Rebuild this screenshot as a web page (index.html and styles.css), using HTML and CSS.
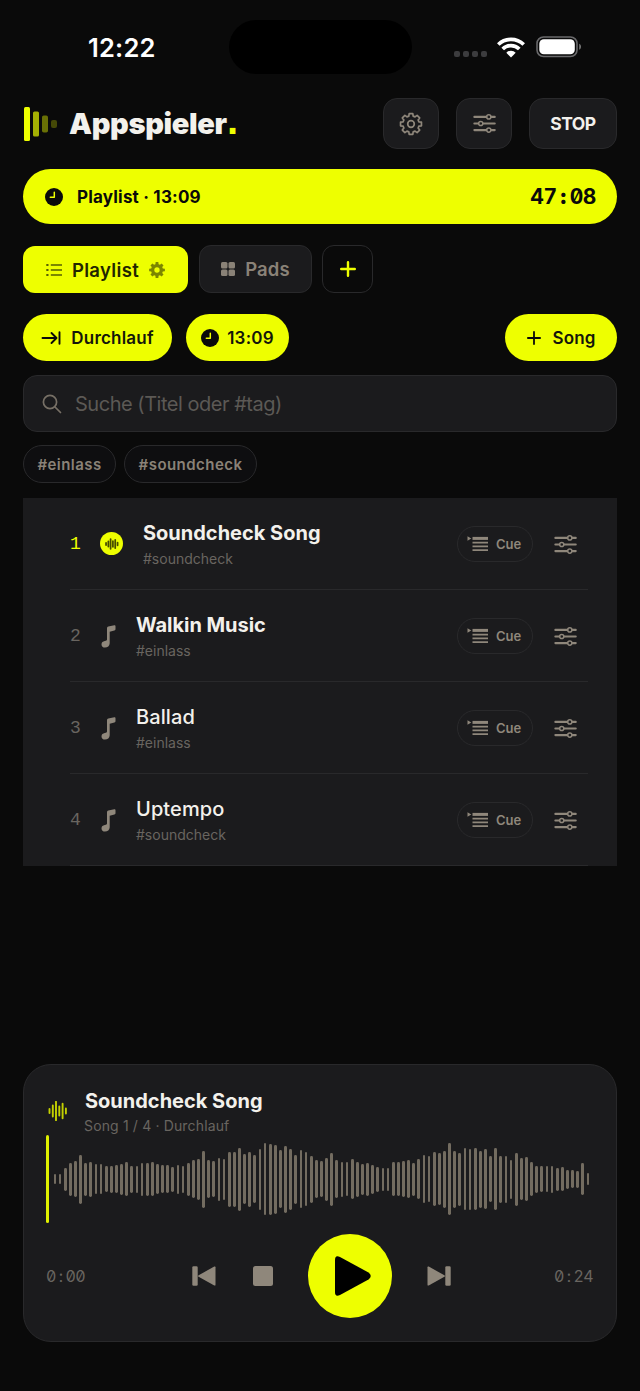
FILE: index.html
```html
<!DOCTYPE html>
<html lang="de">
<head>
<meta charset="utf-8">
<title>Appspieler</title>
<link rel="stylesheet" href="styles.css">
</head>
<body>
<svg class="defs" width="0" height="0">
  <symbol id="sliders" viewBox="0 0 22 20">
    <g fill="none" stroke="currentColor" stroke-width="2" stroke-linecap="round">
      <path d="M1.3 3.7H12.7M17.5 3.7H20.8M1.3 10H5M9.800 10H20.8M1.3 16.300H12.7M17.5 16.300H20.8"/>
      <circle cx="15.100" cy="3.7" r="2" stroke-width="1.4"/><circle cx="7.400" cy="10" r="2" stroke-width="1.4"/><circle cx="15.100" cy="16.300" r="2" stroke-width="1.4"/>
    </g>
  </symbol>
  <symbol id="clock" viewBox="0 0 18 18">
    <circle cx="9" cy="9" r="9" fill="#0a0a0a"/>
    <path d="M9.300 4.300V9.300H5.300" fill="none" stroke="#eeff00" stroke-width="1.500" stroke-linecap="round" stroke-linejoin="round"/>
  </symbol>
  <symbol id="note" viewBox="0 0 15 23">
    <path d="M6 3.200Q6 1.900 7.300 1.600L13.300.300Q14.500 0 14.500 1.200V4.300Q14.500 5.300 13.400 5.600L8.700 6.700V18.300C8.700 21 6.500 22.600 4 22.600C1.900 22.600.500 21.500.500 19.500C.5 17.500 1.900 16.500 3.800 16.100C5.300 15.800 6 15.400 6 14.500Z" fill="currentColor"/>
  </symbol>
  <symbol id="cue" viewBox="0 0 22 16">
    <path d="M.5.200L4.300 2.500L.5 4.800Z" fill="currentColor"/>
    <path d="M5.500 2.400H21" stroke="currentColor" stroke-width="3"/>
    <path d="M5.500 6.600H21M5.500 10.400H21M5.500 14.100H21" stroke="currentColor" stroke-width="1.900"/>
  </symbol>
  <symbol id="wave" viewBox="0 0 20 20">
    <path d="M1.500 8V12M4.800 4.500V15.500M8 .800V19.200M11.300 5.500V14.500M14.600 2.800V17.200M17.900 7.500V12.500" stroke="currentColor" stroke-width="1.900" stroke-linecap="round"/>
  </symbol>
</svg>
<div class="app">
  <div class="status">
    <span class="time">12:22</span>
    <span class="island"></span>
    <div class="signals">
      <span class="dots"><i></i><i></i><i></i><i></i></span>
      <svg class="wifi" width="28" height="21" viewBox="0 0 28 21"><g fill="none" stroke="#fff" stroke-width="3.700"><path d="M1.300 7.500A18.200 18.200 0 0 1 26.700 7.500"/><path d="M5.700 12A11.800 11.800 0 0 1 22.300 12"/></g><path d="M14 20.500L9.300 15.700A6.600 6.600 0 0 1 18.700 15.700Z" fill="#fff"/></svg>
      <svg width="46" height="22" viewBox="0 0 46 22"><rect x="1" y="1" width="40" height="19.500" rx="6.500" fill="none" stroke="#69696b" stroke-width="1.600"/><rect x="3.300" y="3.200" width="35.500" height="15" rx="4.500" fill="#fff"/><path d="M43.200 7.800C45.600 8.800 45.600 12.800 43.200 13.800Z" fill="#777"/></svg>
    </div>
  </div>

  <header class="header">
    <svg class="logo" width="34" height="34" viewBox="0 0 34 34" fill="#eeff00"><rect x="1" width="6" height="34" rx="1.500"/><rect x="10" y="4.500" width="6" height="25" rx="1.500" opacity=".68"/><rect x="19" y="8.500" width="6" height="17" rx="1.800" opacity=".42"/><rect x="28" y="13" width="6" height="8" rx="2" opacity=".26"/></svg>
    <h1 class="brand">Appspieler<span>.</span></h1>
    <button class="tool"><svg width="24" height="24" viewBox="0 0 24 24" fill="none" stroke="currentColor" stroke-width="1.700" stroke-linejoin="round"><path id="gear-path" d=""/><circle cx="12" cy="12" r="3.300"/></svg></button>
    <button class="tool"><svg width="23" height="21"><use href="#sliders"/></svg></button>
    <button class="tool stop">STOP</button>
  </header>

  <div class="banner">
    <svg width="18" height="18"><use href="#clock"/></svg>
    <span class="banner-title">Playlist · 13:09</span>
    <span class="countdown">47<b>:</b>08</span>
  </div>

  <nav class="tabs">
    <button class="tab active">
      <svg width="16" height="14" viewBox="0 0 16 14" fill="none" stroke="#566000" stroke-width="1.500"><path d="M4.800 2H16M4.800 7H16M4.800 12H16"/><path d="M.3 2H2.500M.3 7H2.500M.3 12H2.500" stroke-width="2.200"/></svg>
      <span>Playlist</span>
      <svg class="cog" width="16" height="16" viewBox="0 0 24 24"><path id="cog-path" d="" fill="#7c8600"/><circle cx="12" cy="12" r="4" fill="#eeff00"/></svg>
    </button>
    <button class="tab pads">
      <svg width="14" height="14" viewBox="0 0 14 14" fill="currentColor"><rect width="6.500" height="6.500" rx="1.500"/><rect x="7.500" width="6.500" height="6.500" rx="1.500"/><rect y="7.500" width="6.500" height="6.500" rx="1.500"/><rect x="7.500" y="7.500" width="6.500" height="6.500" rx="1.500"/></svg>
      <span>Pads</span>
    </button>
    <button class="tab add"><svg width="16" height="16" viewBox="0 0 16 16" stroke="#eeff00" stroke-width="2.400" stroke-linecap="round"><path d="M8 1.200V14.800M1.200 8H14.800"/></svg></button>
  </nav>

  <div class="actions">
    <button class="pill run"><svg width="20" height="16" viewBox="0 0 20 16" fill="none" stroke="#0a0a0a" stroke-width="1.900" stroke-linecap="round" stroke-linejoin="round"><path d="M1.500 8H15M10.500 3L15.500 8L10.500 13M18.500 2.200V13.800"/></svg><span>Durchlauf</span></button>
    <button class="pill at"><svg width="18" height="18"><use href="#clock"/></svg><span>13:09</span></button>
    <button class="pill song"><svg width="14" height="14" viewBox="0 0 14 14" stroke="#0a0a0a" stroke-width="1.800" stroke-linecap="round"><path d="M7 .900V13.100M.9 7H13.100"/></svg><span>Song</span></button>
  </div>

  <label class="search">
    <svg width="20" height="20" viewBox="0 0 20 20" fill="none" stroke="currentColor" stroke-width="1.700" stroke-linecap="round"><circle cx="8" cy="8" r="6.600"/><path d="M13 13L18.500 18.500"/></svg>
    <span>Suche (Titel oder #tag)</span>
  </label>

  <div class="tags"><span class="tag t1">#einlass</span><span class="tag t2">#soundcheck</span></div>

  <ul class="list">
    <li class="row current">
      <span class="num">1</span><span class="badge"><svg width="14" height="12" viewBox="0 0 20 20" preserveAspectRatio="none"><path d="M1.500 8V12M4.800 5.500V14.500M8 1.500V18.500M11.300 5V15M14.600 3V17M18 7.500V12.500" stroke="currentColor" stroke-width="2.500" stroke-linecap="round"/></svg></span>
      <div class="info"><strong>Soundcheck Song</strong><small>#soundcheck</small></div>
      <button class="cue"><svg width="22" height="16"><use href="#cue"/></svg>Cue</button><svg class="opts" width="23" height="21"><use href="#sliders"/></svg>
    </li>
    <li class="row">
      <span class="num">2</span><svg class="note" width="15" height="23"><use href="#note"/></svg>
      <div class="info"><strong class="walkin">Walkin Music</strong><small>#einlass</small></div>
      <button class="cue"><svg width="22" height="16"><use href="#cue"/></svg>Cue</button><svg class="opts" width="23" height="21"><use href="#sliders"/></svg>
    </li>
    <li class="row">
      <span class="num">3</span><svg class="note" width="15" height="23"><use href="#note"/></svg>
      <div class="info"><strong class="regular">Ballad</strong><small>#einlass</small></div>
      <button class="cue"><svg width="22" height="16"><use href="#cue"/></svg>Cue</button><svg class="opts" width="23" height="21"><use href="#sliders"/></svg>
    </li>
    <li class="row">
      <span class="num">4</span><svg class="note" width="15" height="23"><use href="#note"/></svg>
      <div class="info"><strong class="regular">Uptempo</strong><small>#soundcheck</small></div>
      <button class="cue"><svg width="22" height="16"><use href="#cue"/></svg>Cue</button><svg class="opts" width="23" height="21"><use href="#sliders"/></svg>
    </li>
  </ul>

  <section class="player">
    <div class="now">
      <svg width="20" height="20"><use href="#wave"/></svg>
      <div class="info"><strong>Soundcheck Song</strong><small>Song 1 / 4 · Durchlauf</small></div>
    </div>
    <div class="waveform"><span class="playhead"></span><div class="bars" id="bars"></div></div>
    <div class="controls">
      <span class="clock">0<b>:</b>00</span>
      <div class="buttons">
        <svg width="24" height="20" viewBox="0 0 24 20" fill="currentColor"><rect x=".3" y=".3" width="5.400" height="19.400" rx="1.300"/><path d="M22.300.600Q23.500 0 23.500 1.300V18.700Q23.500 20 22.300 19.400L6.600 10.800Q5.500 10 6.600 9.200Z"/></svg>
        <svg class="halt" width="20" height="20" viewBox="0 0 20 20" fill="currentColor"><rect width="20" height="20" rx="2.500"/></svg>
        <span class="play"><svg width="36" height="40" viewBox="0 0 36 40"><path d="M0 4Q0-1.500 5 1L33.500 16.500Q38 20 33.500 23.500L5 39Q0 41.500 0 36Z"/></svg></span>
        <svg width="24" height="20" viewBox="0 0 24 20" fill="currentColor"><rect x="18.300" y=".3" width="5.400" height="19.400" rx="1.300"/><path d="M1.700.600Q.5 0 .5 1.300V18.700Q.5 20 1.700 19.400L17.400 10.800Q18.500 10 17.400 9.200Z"/></svg>
      </div>
      <span class="clock end">0<b>:</b>24</span>
    </div>
  </section>
</div>
<script src="app.js"></script>
</body>
</html>
```
FILE: styles.css
```css
* { box-sizing: border-box; }
body { margin: 0; background: #0a0a0a; color: #f3f1ec; font-family: Inter, "Liberation Sans", sans-serif; }
button { font: inherit; color: inherit; border: 0; padding: 0; background: none; }
svg { flex: none; display: block; }
.defs { position: absolute; }
.app { width: 640px; height: 1391px; padding: 0 23px; display: flex; flex-direction: column; overflow: hidden; }
.app > * { flex: none; }

.status { height: 98px; padding: 20px 35px 0 65px; display: flex; align-items: flex-start; }
.time { width: 141px; height: 54px; line-height: 56px; font-size: 25.500px; font-weight: 600; letter-spacing: .2px; color: #fff; }
.island { width: 183px; height: 54px; border-radius: 27px; background: #000; }
.signals { margin-left: auto; height: 54px; display: flex; align-items: center; }
.dots { display: flex; gap: 3px; padding-top: 14px; margin-right: 10px; }
.dots i { width: 6px; height: 6px; border-radius: 2px; background: #3c3c3e; }
.wifi { margin-right: 11px; }

.header { height: 51px; display: flex; align-items: center; gap: 17px; color: #8f877b; }
.brand { margin: 0 auto 0 -5px; font-size: 29px; line-height: 51px; font-weight: 900; letter-spacing: -.350px; color: #f3f1ec; }
.brand span { color: #eeff00; font-family: "Liberation Sans", sans-serif; font-size: 40px; line-height: 1; letter-spacing: 0; margin-left: .400px; }
.tool { width: 56px; height: 51px; border: 1.500px solid #29292b; border-radius: 14px; background: #1b1b1d; display: flex; align-items: center; justify-content: center; }
.stop { width: 88px; color: #f3f1ec; font-size: 17.500px; font-weight: 700; letter-spacing: -.5px; }

.banner { height: 55px; margin-top: 20px; padding: 0 21px 0 22px; border-radius: 28px; background: #eeff00; color: #0a0a0a; display: flex; align-items: center; }
.banner-title { margin-left: 14px; font-size: 17px; font-weight: 700; letter-spacing: .2px; }
.countdown { margin-left: auto; font-size: 21px; font-weight: 700; font-feature-settings: "tnum", "zero"; letter-spacing: -.4px; }
.countdown b { display: inline-block; width: 13px; text-align: center; }

.tabs { height: 48px; margin-top: 21px; display: flex; gap: 11px; }
.tab { height: 48px; border: 1.500px solid #29292b; border-radius: 12px; display: flex; align-items: center; justify-content: center; font-size: 18.500px; font-weight: 600; letter-spacing: .15px; }
.active { width: 165px; height: 47px; margin-top: 1px; border: 0; background: #eeff00; color: #222600; gap: 10px; letter-spacing: .350px; }
.pads { width: 113px; background: #1b1b1d; color: #8a8277; gap: 10px; }
.add { width: 51px; margin-left: -1px; }

.actions { height: 47px; margin-top: 21px; display: flex; gap: 14px; }
.pill { height: 47px; border-radius: 24px; background: #eeff00; color: #14160a; display: flex; align-items: center; justify-content: center; font-size: 17px; font-weight: 600; letter-spacing: .2px; }
.run { width: 149px; gap: 10px; }
.at { width: 103px; gap: 8px; }
.song { width: 112px; margin-left: auto; padding-left: 1px; gap: 11px; }

.search { height: 57px; margin-top: 14px; padding-left: 18px; border: 1.500px solid #29292b; border-radius: 14px; background: #1b1b1d; color: #777066; display: flex; align-items: center; gap: 13px; font-size: 20px; letter-spacing: -.480px; }
.search span { color: #5c5955; }
.tags { height: 38px; margin-top: 13px; display: flex; gap: 8px; }
.tag { height: 38px; border: 1.500px solid #29292b; border-radius: 19px; background: #0e0e10; color: #8a8277; line-height: 37px; text-align: center; font-size: 15px; font-weight: 600; letter-spacing: .450px; }
.t1 { width: 93px; }
.t2 { width: 133px; }

.list { height: 368px; margin: 15px 0 0; padding: 0 29px 0 47px; list-style: none; background: #1b1b1d; }
.row { height: 92px; border-bottom: 1.500px solid #29292b; display: flex; align-items: center; color: #8f877b; }
.num { width: 30px; padding-top: 1px; color: #696560; font: 18px "Liberation Mono", monospace; }
.current .num { color: #eeff00; }
.badge { width: 23px; height: 23px; border-radius: 50%; background: #eeff00; color: #454b00; display: flex; align-items: center; justify-content: center; margin-right: 20px; }
.note { margin: 1px 20px 0 1px; }
.info { display: flex; flex-direction: column; }
.row .info { padding-top: 3px; }
.info strong { font-size: 20px; line-height: 26px; font-weight: 700; letter-spacing: 0; color: #f3f1ec; white-space: nowrap; }
.info .walkin { letter-spacing: -.050px; }
.info .regular { font-weight: 500; letter-spacing: .1px; }
.info small { font-size: 14px; line-height: 25px; color: #696560; white-space: nowrap; }
.cue { width: 76px; height: 36px; margin-left: auto; padding-right: 2px; border: 1.500px solid #29292b; border-radius: 18px; display: flex; align-items: center; justify-content: center; gap: 7px; font-size: 13px; font-weight: 600; }
.opts { margin: 1px 11px 0 21px; }

.player { height: 278px; margin-top: 198px; padding: 24px 23px 0; border: 1.500px solid #29292b; border-radius: 28px; background: #1b1b1d; }
.now { height: 47px; display: flex; align-items: center; gap: 16px; color: #c4d100; padding-left: 1px; }
.now > svg { margin-bottom: 4px; }
.now .info { padding-bottom: 1px; }
.now .info small { line-height: 23px; letter-spacing: .150px; }
.now .info strong { padding-left: 1px; }
.waveform { height: 88px; margin-top: -1px; display: flex; align-items: center; }
.playhead { width: 3px; height: 88px; border-radius: 2px; background: #dff000; margin-left: -1px; }
.bars { display: flex; align-items: center; justify-content: space-between; width: 536.500px; margin-left: 4.500px; }
.bars i { width: 2.800px; border-radius: 1.400px; background: #736c60; }
.controls { height: 84px; margin-top: 11px; display: flex; align-items: center; color: #8f877b; }
.clock { width: 145px; margin-left: -1px; color: #696560; font-size: 16px; font-feature-settings: "tnum", "zero"; letter-spacing: -.600px; }
.clock b { display: inline-block; width: 9.600px; text-align: center; font-weight: 400; }
.end { margin-left: auto; text-align: right; }
.buttons { display: flex; align-items: center; margin-left: 1px; }
.clock:first-child { flex: none; }
.halt { margin: 0 35px 0 37px; }
.play { width: 84px; height: 84px; border-radius: 50%; background: #eeff00; display: flex; align-items: center; justify-content: center; padding-left: 5px; margin-right: 35px; }
```
FILE: app.js
```js
const levels = [10,10,23,33,36,49,33,35,30,30,26,27,28,31,34,27,27,33,33,34,30,28,28,25,29,27,33,38,41,57,38,36,43,
  41,55,55,63,50,55,48,61,72,71,69,58,67,61,49,58,54,47,38,36,43,53,38,35,34,40,35,31,33,29,25,23,23,34,34,36,38,33,40,
  48,46,54,52,57,72,57,53,62,61,62,57,60,46,62,47,47,39,53,42,44,34,27,26,26,27,23,24,19,18,17,32,12];
const bars = document.getElementById('bars');
for (const level of levels) {
  const bar = document.createElement('i');
  bar.style.height = level + 'px';
  bars.appendChild(bar);
}

// Eight-toothed wheel centred in a 24-unit box.
function gear(outer, inner) {
  const points = [];
  for (let i = 0; i < 8; i++) {
    const a = i * Math.PI / 4 - Math.PI / 2;
    for (const [offset, r] of [[-0.27, inner], [-0.17, outer], [0.17, outer], [0.27, inner]]) {
      points.push((12 + r * Math.cos(a + offset)).toFixed(2) + ' ' + (12 + r * Math.sin(a + offset)).toFixed(2));
    }
  }
  return 'M' + points.join('L') + 'Z';
}
document.getElementById('gear-path').setAttribute('d', gear(10.6, 8.2));
document.getElementById('cog-path').setAttribute('d', gear(12, 9));
```
